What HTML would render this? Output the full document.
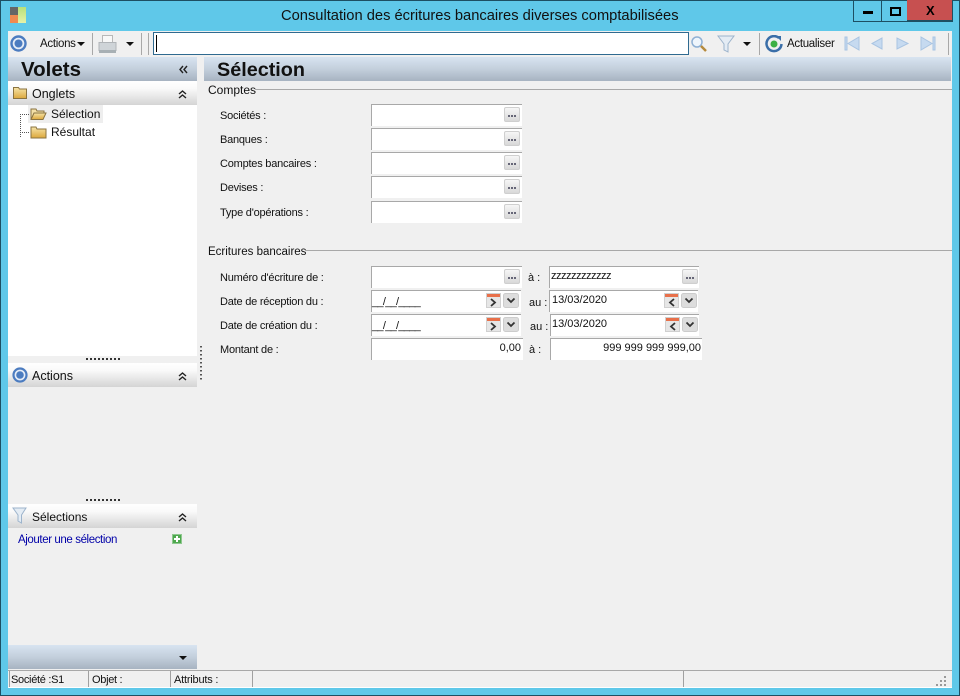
<!DOCTYPE html>
<html lang="fr"><head><meta charset="utf-8"><title>Consultation</title>
<style>
html,body{margin:0;padding:0;width:960px;height:696px;overflow:hidden;background:#5fc8e9}
body{position:relative;font-family:"Liberation Sans",sans-serif;font-size:11px;letter-spacing:-.22px;color:#111}
div,span,svg{position:absolute;white-space:nowrap;box-sizing:border-box}
.t{line-height:14px;height:14px}
.f{background:#fff;border-top:1px solid #a8a8a8;border-left:1px solid #a8a8a8;height:22px}
.bd{width:16px;height:15px;background:linear-gradient(#f6f6f6,#d8d8d8);border:1px solid #cfcfcf;border-radius:2px}
.bd:after{content:"";position:absolute;left:3px;top:7px;width:8px;height:2px;background:repeating-linear-gradient(90deg,#667 0 2px,transparent 2px 3px)}
.ph{background:linear-gradient(#fff,#fafafa 30%,#d4d4d4);left:8px;width:189px;height:24px}
.bh{background:linear-gradient(#d8e4f1,#c3cfdc 50%,#a7b3c1)}
.dots{height:2px;background:repeating-linear-gradient(90deg,#333 0 2px,transparent 2px 4px)}
.sep{width:1px;background:#a8a8a8;top:33px;height:22px}
</style></head><body>
<div style="left:0;top:0;width:960px;height:696px;border:1px solid #1d4f63"></div>
<svg style="left:10px;top:7px" width="16" height="16"><defs><linearGradient id="ic" x1="0" y1="0" x2="0" y2="1"><stop offset="0" stop-color="#b8e07a"/><stop offset="1" stop-color="#e6f2a8"/></linearGradient></defs><rect x="0" y="0" width="8" height="8" fill="#666"/><rect x="0" y="8" width="8" height="8" fill="#f08a50"/><rect x="8" y="0" width="8" height="16" fill="url(#ic)"/></svg>
<div class="t" style="left:281px;top:8px;width:400px;height:17px;line-height:17px;font-size:14.7px;letter-spacing:0;color:#111">Consultation des écritures bancaires diverses comptabilisées</div>
<div style="left:853px;top:0;width:100px;height:22px;border:1px solid #1d4f63;border-top:0"></div>
<div style="left:881px;top:0;width:1px;height:21px;background:#1d4f63"></div>
<div style="left:907px;top:0;width:46px;height:21px;background:#c75050;border:1px solid #1d4f63;border-top:0;border-left:0"></div>
<div style="left:863px;top:11px;width:10px;height:3px;background:#000"></div>
<div style="left:890px;top:7px;width:11px;height:9px;border:2px solid #000"></div>
<div style="left:926px;top:2px;font:bold 13px/17px 'Liberation Sans',sans-serif;letter-spacing:0;color:#000">X</div>

<div style="left:8px;top:31px;width:944px;height:657px;background:#f0f0f0"></div>

<!-- toolbar -->
<svg style="left:10px;top:35px" width="17" height="17"><circle cx="8.5" cy="8.5" r="7" fill="#e6edf7" stroke="#4c7cc0" stroke-width="2.400"/><circle cx="8.5" cy="8.5" r="4" fill="#4c7cc0"/></svg>
<div class="t" style="left:40px;top:37px;font-size:11.5px;letter-spacing:-.3px">Actions</div>
<svg style="left:77px;top:42px" width="9" height="5"><path d="M0 0h8L4 4z" fill="#111"/></svg>
<div class="sep" style="left:92px"></div>
<svg style="left:98px;top:34px" width="19" height="20"><path d="M4.500 1.500h10v7h-10z" fill="#f8f8f8" stroke="#b8b8b8"/><path d="M1 8.500h17v8H1z" fill="#cfd4d8" stroke="#b0b4b8"/><path d="M1 16h17v3H1z" fill="#a8b0b4"/></svg>
<svg style="left:126px;top:42px" width="9" height="5"><path d="M0 0h8L4 4z" fill="#111"/></svg>
<div class="sep" style="left:141px"></div><div class="sep" style="left:148px"></div>
<div style="left:153px;top:32px;width:536px;height:23px;background:#fff;border:1px solid #2f6a90"></div>
<div style="left:156px;top:35px;width:1px;height:17px;background:#000"></div>
<svg style="left:690px;top:35px" width="18" height="18"><circle cx="7" cy="7" r="5" fill="#eef5fc" stroke="#8fb0d4" stroke-width="1.500"/><path d="M11 11l5 5" stroke="#b58a3c" stroke-width="2.500"/></svg>
<svg style="left:717px;top:35px" width="19" height="18"><path d="M1 1h16l-6 8v8l-4-2V9z" fill="#e4ecf4" stroke="#9db4cc"/></svg>
<svg style="left:743px;top:42px" width="9" height="5"><path d="M0 0h8L4 4z" fill="#111"/></svg>
<div class="sep" style="left:759px"></div>
<svg style="left:765px;top:35px" width="18" height="18"><path d="M14 3A7.500 7.500 0 1 0 16.500 9" fill="none" stroke="#3a6ea8" stroke-width="2.500"/><path d="M11 1l5 0 0 5z" fill="#3a6ea8"/><circle cx="9" cy="9" r="3.500" fill="#3cb043"/></svg>
<div class="t" style="left:787px;top:37px;font-size:11.500px;letter-spacing:-.3px">Actualiser</div>
<svg style="left:844px;top:36px" width="94" height="16"><g fill="#c6daf0" stroke="#a9c4e2"><path d="M1 1h2v13H1zM15 1v13L4 7.500z"/><path d="M38 2v11L28 7.500z"/><path d="M53 2v11l11-5.500z"/><path d="M77 1v13l11-6.500zM89 1h2v13h-2z"/></g></svg>
<div class="sep" style="left:948px"></div>

<!-- headers -->
<div class="bh" style="left:8px;top:57px;width:189px;height:24px"></div>
<div class="bh" style="left:204px;top:57px;width:747px;height:24px"></div>
<div class="t" style="left:21px;top:60px;height:20px;line-height:20px;font-size:20.500px;letter-spacing:0;font-weight:bold">Volets</div>
<div class="t" style="left:217px;top:60px;height:20px;line-height:20px;font-size:19.800px;letter-spacing:0;font-weight:bold">Sélection</div>
<svg style="left:179px;top:65px" width="9" height="9"><path d="M4 1L1 4.500l3 3.500M8 1L5 4.500l3 3.500" fill="none" stroke="#222" stroke-width="1.400"/></svg>
<div style="left:204px;top:81px;width:747px;height:2px;background:#f0f0f0"></div>

<!-- left pane -->
<svg width="0" height="0"><defs><linearGradient id="fo" x1="0" y1="0" x2="0" y2="1"><stop offset="0" stop-color="#f6e4a8"/><stop offset="1" stop-color="#dca83c"/></linearGradient></defs></svg>
<div style="left:8px;top:105px;width:189px;height:251px;background:#fff"></div>
<div class="ph" style="top:81px"></div>
<svg style="left:13px;top:86px" width="14" height="13"><path d="M0.500 1.500h5l1 1.500h7v9.500h-13z" fill="url(#fo)" stroke="#8a7340"/></svg>
<div class="t" style="left:32px;top:87px;font-size:12.500px;letter-spacing:0">Onglets</div>
<svg style="left:178px;top:90px" width="9" height="9"><path d="M1 4L4.500 1 8 4M1 8L4.500 5 8 8" fill="none" stroke="#222" stroke-width="1.400"/></svg>
<div style="left:28px;top:105px;width:75px;height:18px;background:#eeeeee"></div>
<div style="left:20px;top:114px;height:24px;width:1px;background:repeating-linear-gradient(#555 0 1px,transparent 1px 2px)"></div>
<div style="left:20px;top:114px;width:10px;height:1px;background:repeating-linear-gradient(90deg,#555 0 1px,transparent 1px 2px)"></div>
<div style="left:20px;top:132px;width:10px;height:1px;background:repeating-linear-gradient(90deg,#555 0 1px,transparent 1px 2px)"></div>
<svg style="left:30px;top:107px" width="17" height="14"><path d="M1 12V2h5l1 2h7v2" fill="#f3e0a8" stroke="#8a7340"/><path d="M1 12.500l3-6.500h12l-3 6.500z" fill="url(#fo)" stroke="#8a7340"/></svg>
<svg style="left:30px;top:125px" width="17" height="14"><path d="M1 2h5l1 2h9v9H1z" fill="url(#fo)" stroke="#8a7340"/></svg>
<div class="t" style="left:51px;top:107px;font-size:12px;letter-spacing:0">Sélection</div>
<div class="t" style="left:51px;top:125px;font-size:12px;letter-spacing:0">Résultat</div>

<div class="dots" style="left:86px;top:358px;width:35px"></div>
<div style="left:200px;top:346px;width:2px;height:35px;background:repeating-linear-gradient(#555 0 1.500px,transparent 1.500px 4px)"></div>
<div class="ph" style="top:363px"></div>
<svg style="left:12px;top:367px" width="16" height="16"><circle cx="8" cy="8" r="6.500" fill="#e6edf7" stroke="#4c7cc0" stroke-width="2.200"/><circle cx="8" cy="8" r="3.800" fill="#4c7cc0"/></svg>
<div class="t" style="left:32px;top:369px;font-size:12.500px;letter-spacing:0">Actions</div>
<svg style="left:178px;top:372px" width="9" height="9"><path d="M1 4L4.500 1 8 4M1 8L4.500 5 8 8" fill="none" stroke="#222" stroke-width="1.400"/></svg>

<div class="dots" style="left:86px;top:499px;width:35px"></div>
<div class="ph" style="top:504px"></div>
<svg style="left:12px;top:507px" width="16" height="18"><path d="M1 1h13L9.500 8v8L6 14V8z" fill="#e4ecf4" stroke="#9db4cc"/></svg>
<div class="t" style="left:32px;top:510px;font-size:12px;letter-spacing:0">Sélections</div>
<svg style="left:178px;top:513px" width="9" height="9"><path d="M1 4L4.500 1 8 4M1 8L4.500 5 8 8" fill="none" stroke="#222" stroke-width="1.400"/></svg>
<div class="t" style="left:18px;top:533px;font-size:11.500px;letter-spacing:-.4px;color:#0000a8">Ajouter une sélection</div>
<svg style="left:172px;top:534px" width="10" height="10"><rect width="10" height="10" fill="#4ea84e"/><rect x=".5" y=".5" width="9" height="9" fill="none" stroke="#8fc88f"/><path d="M5 2v6M2 5h6" stroke="#fff" stroke-width="2"/></svg>
<div class="bh" style="left:8px;top:645px;width:189px;height:24px"></div>
<svg style="left:179px;top:656px" width="9" height="5"><path d="M0 0h8L4 4z" fill="#111"/></svg>

<!-- Comptes -->
<div class="t" style="left:208px;top:83px;font-size:12px;letter-spacing:0">Comptes</div>
<div style="left:255px;top:89px;width:697px;height:1px;background:#a8a8a8"></div>
<div class="t" style="left:220px;top:109px">Sociétés :</div>
<div class="t" style="left:220px;top:133px">Banques :</div>
<div class="t" style="left:220px;top:157px">Comptes bancaires :</div>
<div class="t" style="left:220px;top:181px">Devises :</div>
<div class="t" style="left:220px;top:206px">Type d'opérations :</div>
<div class="f" style="left:371px;top:104px;width:151px"></div><div class="bd" style="left:504px;top:107px"></div>
<div class="f" style="left:371px;top:128px;width:151px"></div><div class="bd" style="left:504px;top:131px"></div>
<div class="f" style="left:371px;top:152px;width:151px"></div><div class="bd" style="left:504px;top:155px"></div>
<div class="f" style="left:371px;top:176px;width:151px"></div><div class="bd" style="left:504px;top:179px"></div>
<div class="f" style="left:371px;top:201px;width:151px"></div><div class="bd" style="left:504px;top:204px"></div>

<!-- Ecritures -->
<div class="t" style="left:208px;top:245px;font-size:11.500px;letter-spacing:0">Ecritures bancaires</div>
<div style="left:305px;top:250px;width:647px;height:1px;background:#a8a8a8"></div>
<div class="t" style="left:220px;top:271px">Numéro d'écriture de :</div>
<div class="t" style="left:220px;top:295px">Date de réception du :</div>
<div class="t" style="left:220px;top:319px">Date de création du :</div>
<div class="t" style="left:220px;top:343px">Montant de :</div>

<div class="f" style="left:371px;top:266px;width:151px"></div><div class="bd" style="left:504px;top:269px"></div>
<div class="t" style="left:528px;top:271px;letter-spacing:0">à :</div>
<div class="f" style="left:549px;top:266px;width:150px"></div><div class="bd" style="left:682px;top:269px"></div>
<div class="t" style="left:551px;top:269px;letter-spacing:-.5px">zzzzzzzzzzzz</div>

<div class="f" style="left:371px;top:290px;width:150px"></div>
<div class="t" style="left:372px;top:295px;letter-spacing:-.7px">__/__/____</div>
<div class="t" style="left:529px;top:296px;letter-spacing:0">au :</div>
<div class="f" style="left:549px;top:290px;width:149px"></div>
<div class="t" style="left:552px;top:293px;letter-spacing:0">13/03/2020</div>

<div class="f" style="left:371px;top:314px;width:150px"></div>
<div class="t" style="left:372px;top:319px;letter-spacing:-.7px">__/__/____</div>
<div class="t" style="left:530px;top:320px;letter-spacing:0">au :</div>
<div class="f" style="left:550px;top:314px;width:149px"></div>
<div class="t" style="left:552px;top:317px;letter-spacing:0">13/03/2020</div>

<div class="f" style="left:371px;top:338px;width:152px"></div>
<div class="t" style="left:400px;top:341px;width:121px;text-align:right;letter-spacing:0">0,00</div>
<div class="t" style="left:529px;top:343px;letter-spacing:0">à :</div>
<div class="f" style="left:550px;top:338px;width:152px"></div>
<div class="t" style="left:560px;top:341px;width:141px;text-align:right;letter-spacing:0">999 999 999 999,00</div>

<!-- date buttons -->
<svg style="left:486px;top:293px" width="34" height="16"><rect x=".5" y=".5" width="14" height="14" fill="#e6e6e6" stroke="#d0d0d0"/><rect x="1" y="1" width="13" height="3" fill="#e8704a"/><path d="M5 6l4 3.500-4 3.500" fill="none" stroke="#333" stroke-width="1.800"/><rect x="17.500" y=".5" width="15" height="14" rx="2" fill="#ddd" stroke="#ccc"/><path d="M21.500 5.500l3.500 3.500 3.500-3.500" fill="none" stroke="#333" stroke-width="1.800"/></svg>
<svg style="left:486px;top:317px" width="34" height="16"><rect x=".5" y=".5" width="14" height="14" fill="#e6e6e6" stroke="#d0d0d0"/><rect x="1" y="1" width="13" height="3" fill="#e8704a"/><path d="M5 6l4 3.500-4 3.500" fill="none" stroke="#333" stroke-width="1.800"/><rect x="17.500" y=".5" width="15" height="14" rx="2" fill="#ddd" stroke="#ccc"/><path d="M21.500 5.500l3.500 3.500 3.500-3.500" fill="none" stroke="#333" stroke-width="1.800"/></svg>
<svg style="left:664px;top:293px" width="34" height="16"><rect x=".5" y=".5" width="14" height="14" fill="#e6e6e6" stroke="#d0d0d0"/><rect x="1" y="1" width="13" height="3" fill="#e8704a"/><path d="M10 6L6 9.500l4 3.500" fill="none" stroke="#333" stroke-width="1.800"/><rect x="17.500" y=".5" width="15" height="14" rx="2" fill="#ddd" stroke="#ccc"/><path d="M21.500 5.500l3.500 3.500 3.500-3.500" fill="none" stroke="#333" stroke-width="1.800"/></svg>
<svg style="left:665px;top:317px" width="34" height="16"><rect x=".5" y=".5" width="14" height="14" fill="#e6e6e6" stroke="#d0d0d0"/><rect x="1" y="1" width="13" height="3" fill="#e8704a"/><path d="M10 6L6 9.500l4 3.500" fill="none" stroke="#333" stroke-width="1.800"/><rect x="17.500" y=".5" width="15" height="14" rx="2" fill="#ddd" stroke="#ccc"/><path d="M21.500 5.500l3.500 3.500 3.500-3.500" fill="none" stroke="#333" stroke-width="1.800"/></svg>

<!-- status bar -->
<div style="left:8px;top:670px;width:944px;height:1px;background:#a8a8a8"></div>
<div style="left:8px;top:687px;width:944px;height:1px;background:#fff"></div>
<div style="left:9px;top:671px;width:1px;height:16px;background:#a0a0a0"></div>
<div style="left:88px;top:671px;width:1px;height:16px;background:#a0a0a0"></div>
<div style="left:170px;top:671px;width:1px;height:16px;background:#a0a0a0"></div>
<div style="left:252px;top:671px;width:1px;height:16px;background:#a0a0a0"></div>
<div style="left:683px;top:671px;width:1px;height:16px;background:#a0a0a0"></div>
<div class="t" style="left:11px;top:673px;letter-spacing:-.3px">Société :S1</div>
<div class="t" style="left:92px;top:673px;letter-spacing:-.3px">Objet :</div>
<div class="t" style="left:174px;top:673px;letter-spacing:-.2px">Attributs :</div>
<svg style="left:936px;top:675px" width="12" height="12" fill="#999"><rect x="8" y="1" width="2" height="2"/><rect x="4" y="5" width="2" height="2"/><rect x="8" y="5" width="2" height="2"/><rect x="0" y="9" width="2" height="2"/><rect x="4" y="9" width="2" height="2"/><rect x="8" y="9" width="2" height="2"/></svg>
</body></html>
